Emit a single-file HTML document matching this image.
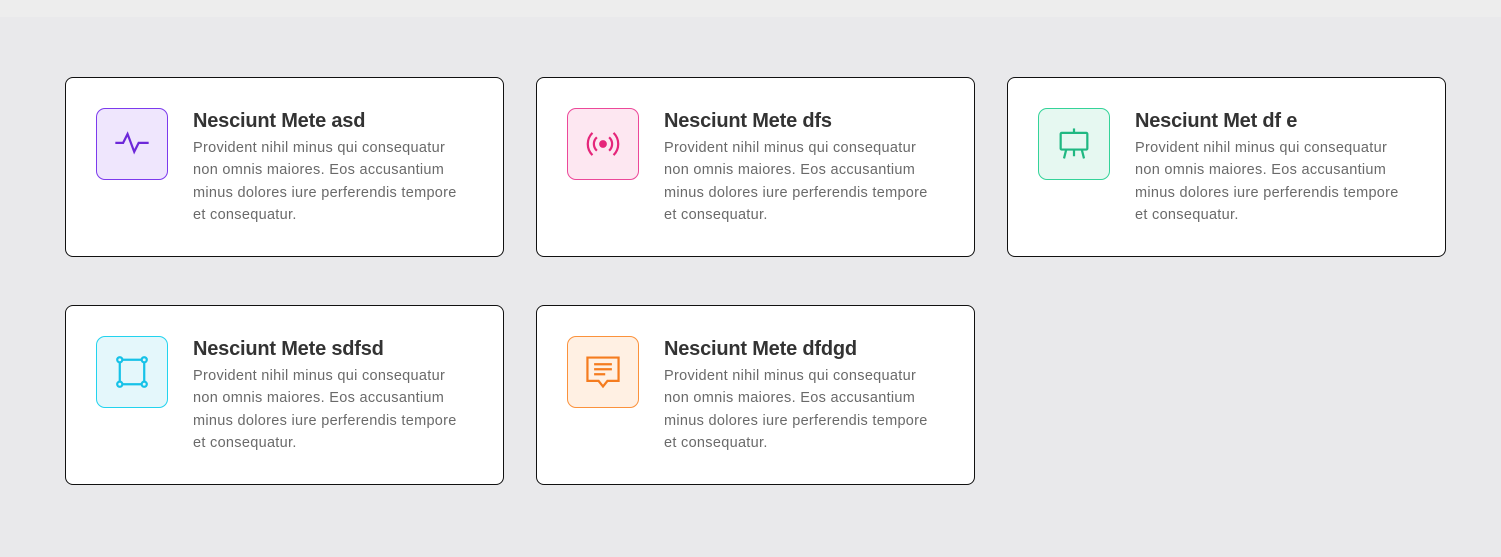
<!DOCTYPE html>
<html><head><style>
body{margin:0;width:1501px;height:557px;background:#e9e9eb;font-family:"Liberation Sans",sans-serif;position:relative;overflow:hidden}
.top{position:absolute;left:0;top:0;width:1501px;height:17px;background:#ededed}
.card{position:absolute;width:439px;height:180px;background:#fff;border:1px solid #111;border-radius:8px;box-sizing:border-box}
.ic{position:absolute;left:30px;top:30px;width:72px;height:72px;border:1px solid;border-radius:9px;box-sizing:border-box;display:flex;align-items:center;justify-content:center}
.t{position:absolute;left:127px;top:32px;font-size:20px;font-weight:bold;color:#333;letter-spacing:-0.2px}
.p{position:absolute;left:127px;top:58.5px;width:270px;font-size:14.5px;line-height:22.5px;color:#6a6a6a;letter-spacing:0.3px}
</style></head><body>
<div class="top"></div>

<div class="card" style="left:65px;top:77px">
<div class="ic" style="border-color:#7c3aed;background:#efe6fd"><svg width="40" height="40" viewBox="0 0 36 36" fill="none" stroke="#6d28d9" stroke-width="2"><path d="M3 17h7l4-8 6 16 4-8h9"/></svg></div>
<div class="t">Nesciunt Mete asd</div>
<div class="p">Provident nihil minus qui consequatur non omnis maiores. Eos accusantium minus dolores iure perferendis tempore et consequatur.</div></div>

<div class="card" style="left:536px;top:77px">
<div class="ic" style="border-color:#ec4899;background:#fde7f1"><svg width="40" height="40" viewBox="0 0 36 36" fill="none" stroke="#e5267a" stroke-width="2"><circle cx="18" cy="18" r="3.5" fill="#e5267a" stroke="none"/><path d="M12.5 12a8 8 0 0 0 0 12M23.5 12a8 8 0 0 1 0 12M8.5 8a14 14 0 0 0 0 20M27.5 8a14 14 0 0 1 0 20"/></svg></div>
<div class="t">Nesciunt Mete dfs</div>
<div class="p">Provident nihil minus qui consequatur non omnis maiores. Eos accusantium minus dolores iure perferendis tempore et consequatur.</div></div>

<div class="card" style="left:1007px;top:77px">
<div class="ic" style="border-color:#34d399;background:#e6f8f1"><svg width="40" height="40" viewBox="0 0 36 36" fill="none" stroke="#20b882" stroke-width="2"><path d="M18 4v4"/><rect x="6" y="8" width="24" height="15" rx="1"/><path d="M11 23l-2 8M18 23v6M25 23l2 8"/></svg></div>
<div class="t">Nesciunt Met df e</div>
<div class="p">Provident nihil minus qui consequatur non omnis maiores. Eos accusantium minus dolores iure perferendis tempore et consequatur.</div></div>

<div class="card" style="left:65px;top:305px">
<div class="ic" style="border-color:#22d3ee;background:#e4f7fb"><svg width="40" height="40" viewBox="0 0 36 36" fill="none" stroke="#16c2e8" stroke-width="2"><path d="M7 9v18M29 9v18M9 7h18M9 29h18"/><circle cx="7" cy="7" r="2.3"/><circle cx="29" cy="7" r="2.3"/><circle cx="7" cy="29" r="2.3"/><circle cx="29" cy="29" r="2.3"/></svg></div>
<div class="t">Nesciunt Mete sdfsd</div>
<div class="p">Provident nihil minus qui consequatur non omnis maiores. Eos accusantium minus dolores iure perferendis tempore et consequatur.</div></div>

<div class="card" style="left:536px;top:305px">
<div class="ic" style="border-color:#fb923c;background:#fff0e3"><svg width="40" height="40" viewBox="0 0 36 36" fill="none" stroke="#f57c1f" stroke-width="2"><path d="M4 5h28v21h-10l-4 5-4-5H4z"/><path d="M10 11h16M10 15.5h16M10 20h10"/></svg></div>
<div class="t">Nesciunt Mete dfdgd</div>
<div class="p">Provident nihil minus qui consequatur non omnis maiores. Eos accusantium minus dolores iure perferendis tempore et consequatur.</div></div>
</body></html>
